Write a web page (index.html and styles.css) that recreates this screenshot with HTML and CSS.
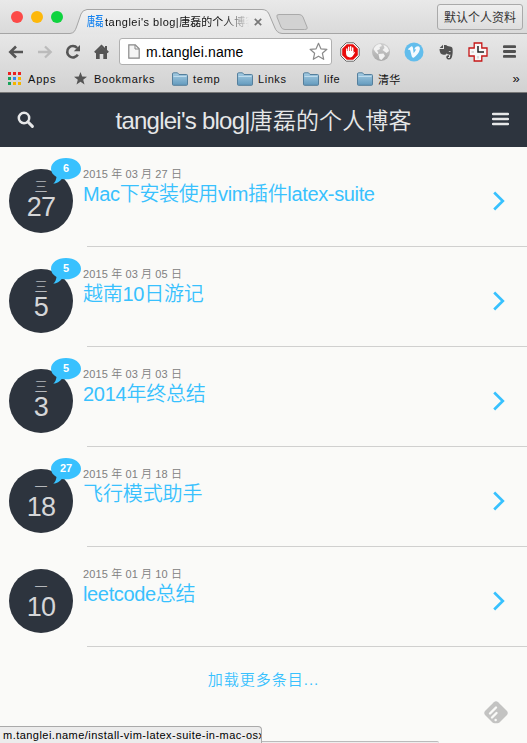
FILE: index.html
```html
<!DOCTYPE html>
<html lang="zh-CN">
<head>
<meta charset="utf-8">
<title>tanglei's blog|唐磊的个人博客</title>
<link rel="stylesheet" href="styles.css">
</head>
<body>
<svg class="defs" width="0" height="0">
  <defs>
    <linearGradient id="folderFill" x1="0" y1="0" x2="0" y2="1"><stop offset="0" stop-color="#a5cce3"/><stop offset="1" stop-color="#639abd"/></linearGradient>
    <linearGradient id="tabFill" x1="0" y1="0" x2="0" y2="1"><stop offset="0" stop-color="#f1f1f1"/><stop offset="1" stop-color="#e6e6e6"/></linearGradient>
    <linearGradient id="globeFill" x1="0" y1="0" x2="0" y2="1"><stop offset="0" stop-color="#cfcfcf"/><stop offset="1" stop-color="#aaa"/></linearGradient>
    <symbol id="folder" viewBox="0 0 16 14"><path d="M.5 2Q.5.8 1.700.8H5.500L7 2.500H14.500Q15.500 2.500 15.500 3.500V12.500Q15.500 13.300 14.500 13.300H1.500Q.5 13.300.5 12.500Z" fill="url(#folderFill)" stroke="#557f9c"/><path d="M1.500 4.500H14.500" stroke="#c0dcec"/></symbol>
    <symbol id="bubble" viewBox="0 0 30 27"><path d="M15 0C23.500 0 30 4.700 30 10.700S23.500 21.300 15 21.300C13.500 21.300 12 21.200 10.800 20.900C8.700 23.500 6 25.300 2.300 25.800C4.300 24 5.200 21.500 5.500 19C2 17 0 14 0 10.700C0 4.700 6.500 0 15 0Z" fill="#38c1fe"/></symbol>
    <symbol id="chevron" viewBox="0 0 12 20"><path d="M1.200 1.500L9.800 10L1.200 18.500" fill="none" stroke="#38c1fe" stroke-width="2.700"/></symbol>
  </defs>
</svg>

<div class="browser">
  <div class="tabstrip">
    <svg class="tab-shape" width="527" height="34" viewBox="0 0 527 34">
      <path d="M70 34C74 33 75 31 76.500 27L81 14Q82.500 10 87 9.500H262Q267 9.500 269 14L274.500 27Q276.500 33 282 34Z" fill="url(#tabFill)"/>
      <path d="M0 33.500H70C74 33 75 31 76.500 27L81 14Q82.500 10 87 9.500H262Q267 9.500 269 14L274.500 27Q276.500 33 282 33.500H527" fill="none" stroke="#a5a5a5"/>
      <path d="M279 14.500H299Q302 14.500 303 17L307 27Q308 29.500 304.500 29.500H285Q282 29.500 281 27L277 17Q276 14.500 279 14.500Z" fill="#d2d2d2" stroke="#aaa"/>
    </svg>
    <div class="lights"><i class="red"></i><i class="yellow"></i><i class="green"></i></div>
    <div class="tab">
      <span class="favicon"><span>唐磊</span></span>
      <span class="tab-title"><span class="tab-latin">tanglei's blog|</span>唐磊的个人博客</span>
      <svg class="tab-close" width="8" height="8" viewBox="0 0 8 8"><path d="M.8.8L7.200 7.200M7.200.8L.8 7.200" stroke="#777" stroke-width="1.700"/></svg>
    </div>
    <div class="profile">默认个人资料</div>
  </div>

  <div class="toolbar">
    <svg class="nav" width="16" height="14" viewBox="0 0 16 14"><path d="M15 7H2.500M8 1.500L2.300 7L8 12.500" fill="none" stroke="#555" stroke-width="2.600"/></svg>
    <svg class="nav" width="16" height="14" viewBox="0 0 16 14"><path d="M1 7H13.500M8 1.500L13.700 7L8 12.500" fill="none" stroke="#bbb" stroke-width="2.300"/></svg>
    <svg class="nav" width="16" height="16" viewBox="0 0 16 16"><path d="M12.800 10.700A5.700 5.700 0 1 1 12.200 4" fill="none" stroke="#555" stroke-width="2.600"/><path d="M15 1V7.200H8.800Z" fill="#555"/></svg>
    <svg class="nav" width="15" height="16" viewBox="0 0 15 16"><path d="M7.500 3L13 8.300V15H9.300V10H5.700V15H2V8.300Z" fill="#555"/><path d="M.8 8.500L7.500 2L14.200 8.500M12 2V6" fill="none" stroke="#555" stroke-width="2"/></svg>
    <div class="address">
      <svg class="page-icon" width="12" height="15" viewBox="0 0 12 15"><path d="M.8.800H7.300L11.200 4.800V14.200H.8Z" fill="#f5f5f5" stroke="#888" stroke-width="1.200"/><path d="M7 1V5H11" fill="none" stroke="#888"/></svg>
      <span class="url">m.tanglei.name</span>
      <svg class="fav-star" width="19" height="19" viewBox="0 0 19 19"><path d="M9.500 1.300L11.900 6.800L17.900 7.300L13.400 11.300L14.700 17.300L9.500 14.200L4.300 17.300L5.600 11.300L1.100 7.300L7.100 6.800Z" fill="#fff" stroke="#8a8a8a" stroke-width="1.200" stroke-linejoin="round"/></svg>
    </div>
    <div class="extensions">
      <svg class="blocker" width="20" height="20" viewBox="0 0 20 20"><path d="M6.200.8H13.800L19.200 6.200V13.800L13.800 19.200H6.200L.8 13.800V6.200Z" fill="#fff" stroke="#666"/><path d="M6.800 2.200H13.200L17.800 6.800V13.200L13.200 17.800H6.800L2.200 13.200V6.800Z" fill="#e80b0b"/><path d="M6.800 10.500V7M8.700 10V5.200M10.700 10V4.800M12.700 10V6" stroke="#fff" stroke-width="1.400" stroke-linecap="round"/><path d="M6.100 9H13.400V11L14.600 9.800Q15.200 10.200 14.700 11L12.800 14Q12 15.500 10 15.400Q6.700 15.200 6.100 12Z" fill="#fff"/></svg>
      <svg class="globe" width="20" height="20" viewBox="0 0 20 20"><circle cx="10" cy="10" r="9" fill="url(#globeFill)"/><path d="M2.500 7Q5 2 9.500 2L11 4L8.500 5L9 7L6 8.500L7.500 11L6.500 12Q4 10 2.500 7ZM12.500 3Q17 4 18 9L15.500 11L13.500 9.500L11.500 8L13.500 6ZM7.500 12L12.500 11.500L14 14L10.500 18L8.500 17Z" fill="#f2f2f2"/></svg>
      <svg class="vimeo" width="20" height="20" viewBox="0 0 20 20"><circle cx="10" cy="10" r="9.500" fill="#62bdec"/><path d="M4 7L7.400 4.300Q8.800 4 9 6L9.700 11.200Q11.500 9 12 7.600Q11.500 6.900 10.300 7.500Q11.200 4.200 14 4.200Q16.300 4.400 15.800 7.500Q15 11.500 10 15.500Q8.300 16.300 7.700 14.300L6.200 8.200Q5.900 7.400 4.700 8.100Z" fill="#f5fbff"/></svg>
      <svg class="evernote" width="16" height="18" viewBox="0 0 16 18"><path d="M5 1.700V5H1.700ZM1.500 6H6V2Q8.500 1.500 9.500 3L13 3.700Q14.500 4 14.600 6Q15 12 13.500 15Q12.800 16.500 10.500 16.500Q8 16 8.300 13.500Q8.700 12.200 11 12.300V14H10V15H11.800L12.500 11.500Q10 12 8.500 10.500Q8 12.200 5.500 11.700Q1.500 11.500 1.500 6Z" fill="#505050"/><path d="M10.600 8.700Q11.500 7 13 8.900Z" fill="#eee"/></svg>
      <svg class="clock" width="20" height="20" viewBox="0 0 20 20"><path d="M6.200 1H13.800V6H19V14H13.800V19H6.200V14H1V6H6.200Z" fill="#f8f8f8" stroke="#c51616" stroke-width="1.300"/><path d="M10 4V10H16" fill="none" stroke="#222" stroke-width="1.500"/><path d="M3.500 10H6M10 14V16.500" stroke="#bbb"/></svg>
      <svg class="menu" width="13" height="13" viewBox="0 0 13 13"><path d="M1.200 1.700H11.800M1.200 6.500H11.800M1.200 11.300H11.800" stroke="#505050" stroke-width="2.800" stroke-linecap="round"/></svg>
    </div>
  </div>

  <div class="bookmarks">
    <svg class="apps" width="13" height="13" viewBox="0 0 13 13"><path d="M0 0h3v3H0zM5 0h3v3H5zM10 0h3v3h-3z" fill="#ea2020"/><path d="M0 5h3v3H0zM0 10h3v3H0z" fill="#18a35a"/><path d="M5 5h3v3H5z" fill="#2f86ee"/><path d="M5 10h3v3H5zM10 5h3v3h-3zM10 10h3v3h-3z" fill="#f4b400"/></svg>
    <span class="label apps-label">Apps</span>
    <svg class="star" width="13" height="13" viewBox="0 0 13 13"><path d="M6.500 0L8.200 4.500L13 4.700L9.200 7.800L10.500 12.500L6.500 9.800L2.500 12.500L3.800 7.800L0 4.700L4.800 4.500Z" fill="#555"/></svg>
    <span class="label marks-label">Bookmarks</span>
    <svg class="folder" width="16" height="14"><use href="#folder"/></svg><span class="label temp-label">temp</span>
    <svg class="folder" width="16" height="14"><use href="#folder"/></svg><span class="label links-label">Links</span>
    <svg class="folder" width="16" height="14"><use href="#folder"/></svg><span class="label life-label">life</span>
    <svg class="folder" width="16" height="14"><use href="#folder"/></svg><span class="label">清华</span>
    <span class="more-marks">»</span>
  </div>
</div>

<header class="site-header">
  <svg width="18" height="18" viewBox="0 0 18 18"><circle cx="7" cy="7" r="5.200" fill="none" stroke="#e6e7e8" stroke-width="2.500"/><path d="M10.800 10.800L15.400 15.400" stroke="#e6e7e8" stroke-width="3" stroke-linecap="round"/></svg>
  <h1><span class="site-latin">tanglei's blog|</span>唐磊的个人博客</h1>
  <svg class="site-menu" width="17" height="14" viewBox="0 0 17 14"><path d="M1 2H16M1 7H16M1 12H16" stroke="#e6e7e8" stroke-width="2.400" stroke-linecap="round"/></svg>
</header>

<main>
  <article class="post">
    <div class="date-disc"><span class="month">三</span><span class="day">27</span><div class="comments"><svg width="30" height="27"><use href="#bubble"/></svg><span>6</span></div></div>
    <div class="post-body"><div class="post-text"><time>2015 年 03 月 27 日</time><h2 class="t1">Mac下安装使用vim插件latex-suite</h2></div><svg class="chevron" width="12" height="20"><use href="#chevron"/></svg></div>
  </article>
  <article class="post">
    <div class="date-disc"><span class="month">三</span><span class="day">5</span><div class="comments"><svg width="30" height="27"><use href="#bubble"/></svg><span>5</span></div></div>
    <div class="post-body"><div class="post-text"><time>2015 年 03 月 05 日</time><h2>越南10日游记</h2></div><svg class="chevron" width="12" height="20"><use href="#chevron"/></svg></div>
  </article>
  <article class="post">
    <div class="date-disc"><span class="month">三</span><span class="day">3</span><div class="comments"><svg width="30" height="27"><use href="#bubble"/></svg><span>5</span></div></div>
    <div class="post-body"><div class="post-text"><time>2015 年 03 月 03 日</time><h2>2014年终总结</h2></div><svg class="chevron" width="12" height="20"><use href="#chevron"/></svg></div>
  </article>
  <article class="post">
    <div class="date-disc"><span class="month">一</span><span class="day">18</span><div class="comments"><svg width="30" height="27"><use href="#bubble"/></svg><span>27</span></div></div>
    <div class="post-body"><div class="post-text"><time>2015 年 01 月 18 日</time><h2 class="t4">飞行模式助手</h2></div><svg class="chevron" width="12" height="20"><use href="#chevron"/></svg></div>
  </article>
  <article class="post">
    <div class="date-disc"><span class="month">一</span><span class="day">10</span></div>
    <div class="post-body"><div class="post-text"><time>2015 年 01 月 10 日</time><h2 class="t5">leetcode总结</h2></div><svg class="chevron" width="12" height="20"><use href="#chevron"/></svg></div>
  </article>
  <div class="load-more">加载更多条目...</div>
</main>

<svg class="feedly" width="26" height="24" viewBox="0 0 26 24"><path d="M10.800 1.200Q13 -.5 15.200 1.200L24 10Q25.500 12 24 14L16.500 21.500Q15.500 22.300 14.500 22.300H11.500Q10.500 22.300 9.500 21.500L2 14Q.5 12 2 10Z" fill="#c3c3c2"/><path d="M7 12.500L13 6.500M9 16.500L13.500 12M12.600 19H12.700" stroke="#fafaf8" stroke-width="2.400" stroke-linecap="round"/></svg>
<div class="status-edge"></div>
<div class="status">m.tanglei.name/install-vim-latex-suite-in-mac-osx</div>
</body>
</html>
```
FILE: styles.css
```css
* { box-sizing: border-box; }
body {
  margin: 0;
  width: 527px;
  height: 743px;
  overflow: hidden;
  position: relative;
  background: #fafaf8;
  font-family: "Liberation Sans", "Noto Sans CJK SC", sans-serif;
}
svg { display: block; flex: none; }
.defs { position: absolute; }

.browser {
  height: 93px;
  background: linear-gradient(#e9e9e9, #dadada 33px, #e7e7e7 34px, #d2d2d2 91px);
  border-bottom: 1px solid #777;
  color: #111;
}
.tabstrip { position: relative; height: 34px; display: flex; }
.tab-shape { position: absolute; left: 0; top: 0; }
.lights { display: flex; gap: 8px; padding: 11px 0 0 11px; width: 87px; }
.lights i { width: 12px; height: 12px; border-radius: 50%; }
.red { background: #fc4a48; }
.yellow { background: #fdb80b; }
.green { background: #0fd33f; }
.tab { position: relative; display: flex; align-items: center; height: 24px; margin-top: 10px; width: 182px; white-space: nowrap; }
.favicon { width: 18px; flex: none; color: #1683ef; font-size: 12px; line-height: 18px; font-weight: 500; }
.favicon span { display: inline-block; transform: scaleX(.68); transform-origin: 0 50%; }
.tab-title {
  flex: none;
  width: 144px;
  overflow: hidden;
  font-size: 11px;
  line-height: 20px;
  letter-spacing: 0;
  -webkit-mask-image: linear-gradient(90deg, #000 118px, transparent 144px);
  mask-image: linear-gradient(90deg, #000 118px, transparent 144px);
}
.tab-latin { letter-spacing: .5px; }
.tab-close { margin-left: 5px; }
.profile {
  position: relative;
  margin: 4px 4px 0 auto;
  width: 86px;
  height: 26px;
  border: 1px solid #aaa;
  border-radius: 3px;
  background: linear-gradient(#efefef, #dedede);
  font-size: 12px;
  line-height: 26px;
  text-align: center;
  color: #333;
}

.toolbar { height: 33px; display: flex; align-items: center; padding: 2px 10px 0 8px; }
.nav { margin-right: 12.500px; }
.address {
  width: 213px;
  height: 27px;
  display: flex;
  align-items: center;
  padding: 0 3px 0 8px;
  background: #fff;
  border: 1px solid #b0b0b0;
  border-radius: 3px;
  margin-left: -2px;
}
.url { flex: 1; margin-left: 6px; font-size: 14px; letter-spacing: .13px; color: #000; }
.extensions { flex: 1; display: flex; align-items: center; margin-left: 8px; }
.globe { margin-left: 11px; }
.vimeo { margin-left: 13px; }
.evernote, .clock { margin-left: 14px; }
.menu { margin-left: 15px; }

.bookmarks { height: 25px; display: flex; align-items: center; padding: 0 7px 2px 8px; font-size: 11px; letter-spacing: .15px; white-space: nowrap; }
.label { margin-left: 5px; }
.apps-label { width: 46px; margin-left: 7px; letter-spacing: .8px; }
.marks-label { width: 72px; margin-left: 7px; margin-right: 6px; letter-spacing: .68px; }
.temp-label { width: 44px; letter-spacing: .75px; }
.links-label { width: 45px; letter-spacing: .55px; }
.life-label { width: 33px; letter-spacing: .5px; }
.more-marks { margin-left: auto; font-size: 13px; }

.site-header {
  height: 54px;
  display: flex;
  align-items: center;
  justify-content: space-between;
  padding: 0 18px 0 17px;
  background: #2d343e;
  color: #e6e7e8;
}
h1 { margin: 2px 0 0; font-size: 23px; font-weight: 350; line-height: 34px; letter-spacing: .1px; white-space: nowrap; }
.site-latin { font-size: 24px; letter-spacing: -.75px; }
.site-menu { margin-top: -2px; }

.post { height: 100px; display: flex; padding-left: 9px; }
.date-disc {
  position: relative;
  flex: none;
  width: 64px;
  height: 64px;
  margin-top: 22px;
  border-radius: 50%;
  background: #2d343e;
  color: #d5d6d8;
  display: flex;
  flex-direction: column;
  align-items: center;
}
.month { font-size: 13px; font-weight: 350; line-height: 14px; margin-top: 11px; color: #b5b8bc; }
.day { font-size: 27px; line-height: 26px; letter-spacing: -.7px; }
.comments { position: absolute; left: 42px; top: -11px; width: 30px; height: 27px; }
.comments span { position: absolute; inset: 0; text-align: center; font-size: 11px; font-weight: bold; line-height: 21px; color: #fff; }
.post-body {
  position: relative;
  flex: 1;
  display: flex;
  justify-content: space-between;
  margin-left: 14px;
  padding: 20px 22px 0 0;
  border-bottom: 1px solid #d0d0cf;
}
.post-text { margin-left: -4px; }
time { display: block; font-size: 11px; line-height: 14px; font-weight: 350; letter-spacing: .12px; color: #808080; white-space: nowrap; }
h2 { margin: 0; font-size: 20px; font-weight: 350; line-height: 26px; color: #38c1fe; white-space: nowrap; letter-spacing: -.25px; }
.t1 { letter-spacing: -.35px; }
.t4 { letter-spacing: -.1px; }
.t5 { letter-spacing: -.35px; }
.chevron { margin-top: 24px; }
.load-more { margin-top: 21px; text-align: center; font-size: 15px; line-height: 24px; font-weight: 350; letter-spacing: 1px; color: #38c1fe; }

.feedly { position: absolute; left: 483px; top: 701px; }
.status {
  position: absolute;
  left: -1px;
  bottom: 0;
  width: 263px;
  height: 17px;
  overflow: hidden;
  padding-left: 3px;
  border: 1px solid #aaa;
  border-bottom: 0;
  border-radius: 0 4px 0 0;
  background: #ececec;
  color: #000;
  font-size: 11px;
  line-height: 17px;
  letter-spacing: .47px;
  white-space: nowrap;
}
.status-edge { position: absolute; left: 260px; bottom: 0; width: 179px; height: 2px; border-top: 1px solid #bbb; border-radius: 0 3px 0 0; background: #eee; }
```
